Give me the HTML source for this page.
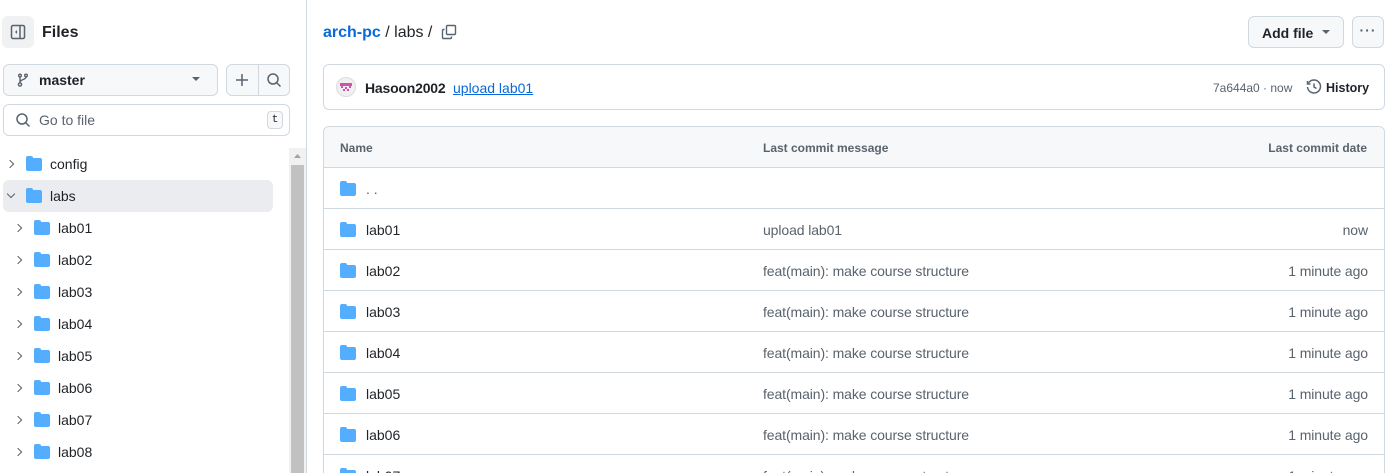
<!DOCTYPE html>
<html style="width:1393px;height:473px;overflow:hidden"><head><style>
*{box-sizing:border-box;margin:0;padding:0}
body{width:1393px;height:473px;overflow:hidden;background:#fff;font-family:"Liberation Sans",sans-serif;color:#1f2328;position:relative;font-size:14px}
.a{position:absolute}
.btn{border:1px solid #d1d9e0;background:#f6f8fa;border-radius:6px}
.fold{position:absolute;width:16px;height:13px;background:#54aeff;border-radius:2px}
.fold:before{content:"";position:absolute;left:0;top:-2px;width:7px;height:4px;background:#54aeff;border-radius:2px 2px 0 0}
.chev{position:absolute;width:6px;height:6px;border-right:1.5px solid #59636e;border-bottom:1.5px solid #59636e;transform:rotate(-45deg)}
.row{position:absolute;left:323px;width:1062px;height:41px;border-top:1px solid #d1d9e0}
.row .n{position:absolute;left:43px;top:13px;font-size:14px}
.row .m{position:absolute;left:440px;top:13px;color:#59636e;letter-spacing:-0.1px}
.row .d{position:absolute;right:17px;top:13px;color:#59636e;letter-spacing:-0.1px}
</style></head><body>
<div class="a" style="left:306px;top:0;width:1px;height:473px;background:#d1d9e0"></div>
<div class="a" style="left:2px;top:16px;width:32px;height:32px;background:#eff1f3;border-radius:6px"></div>
<svg class="a" style="left:10px;top:24px" width="16" height="16" viewBox="0 0 16 16"><rect x="1.5" y="1.5" width="13" height="13" rx="1.5" fill="none" stroke="#59636e" stroke-width="1.5"/><line x1="10" y1="2" x2="10" y2="14" stroke="#59636e" stroke-width="1.5"/><path d="M7 6 L5 8 L7 10Z" fill="#59636e"/></svg>
<div class="a" style="left:42px;top:24px;font-size:16px;font-weight:600">Files</div>
<div class="a btn" style="left:3px;top:64px;width:215px;height:32px"></div>
<svg class="a" style="left:15px;top:72px" width="16" height="16" viewBox="0 0 16 16" fill="none" stroke="#59636e" stroke-width="1.4"><circle cx="5" cy="12.5" r="1.6"/><circle cx="5" cy="3.5" r="1.3"/><circle cx="11" cy="3.5" r="1.3"/><path d="M5 5v6M11 5c0 3-6 2-6 5.5"/></svg>
<div class="a" style="left:39px;top:72px;font-weight:600">master</div>
<svg class="a" style="left:192px;top:77px" width="8" height="5"><path d="M0 0h8L4 4z" fill="#59636e"/></svg>
<div class="a btn" style="left:226px;top:64px;width:64px;height:32px"></div>
<div class="a" style="left:258px;top:65px;width:1px;height:30px;background:#d1d9e0"></div>
<svg class="a" style="left:234px;top:72px" width="16" height="16" viewBox="0 0 16 16" stroke="#59636e" stroke-width="1.5"><path d="M8 2v12M2 8h12"/></svg>
<svg class="a" style="left:266px;top:72px" width="16" height="16" viewBox="0 0 16 16" fill="none" stroke="#59636e" stroke-width="1.5"><circle cx="7" cy="7" r="5"/><path d="M10.5 10.5L14.5 14.5"/></svg>
<div class="a" style="left:3px;top:104px;width:287px;height:32px;border:1px solid #d1d9e0;border-radius:6px"></div>
<svg class="a" style="left:15px;top:112px" width="16" height="16" viewBox="0 0 16 16" fill="none" stroke="#59636e" stroke-width="1.5"><circle cx="7" cy="7" r="5"/><path d="M10.5 10.5L14.5 14.5"/></svg>
<div class="a" style="left:39px;top:112px;color:#59636e">Go to file</div>
<div class="a" style="left:267px;top:111px;width:16px;height:18px;border:1px solid #d1d9e0;border-radius:4px;font-family:'Liberation Mono',monospace;font-size:11px;text-align:center;line-height:16px;background:#f6f8fa">t</div>
<div class="a" style="left:289px;top:148px;width:17px;height:325px;background:#f1f1f1"></div>
<div class="a" style="left:291px;top:165px;width:13px;height:308px;background:#c1c1c1"></div>
<svg class="a" style="left:294px;top:154px" width="7" height="4"><path d="M0 4h7L3.5 0z" fill="#a3a3a3"/></svg>
<div class="a" style="left:3px;top:180px;width:270px;height:32px;background:#eaecef;border-radius:6px"></div>
<div class="chev" style="left:7px;top:161px"></div><div class="fold" style="left:26px;top:158px"></div><div class="a" style="left:50px;top:156px">config</div>
<div class="chev" style="left:8px;top:191px;transform:rotate(45deg)"></div><div class="fold" style="left:26px;top:190px"></div><div class="a" style="left:50px;top:188px">labs</div>
<div class="chev" style="left:15px;top:225px"></div><div class="fold" style="left:34px;top:222px"></div><div class="a" style="left:58px;top:220px">lab01</div>
<div class="chev" style="left:15px;top:257px"></div><div class="fold" style="left:34px;top:254px"></div><div class="a" style="left:58px;top:252px">lab02</div>
<div class="chev" style="left:15px;top:289px"></div><div class="fold" style="left:34px;top:286px"></div><div class="a" style="left:58px;top:284px">lab03</div>
<div class="chev" style="left:15px;top:321px"></div><div class="fold" style="left:34px;top:318px"></div><div class="a" style="left:58px;top:316px">lab04</div>
<div class="chev" style="left:15px;top:353px"></div><div class="fold" style="left:34px;top:350px"></div><div class="a" style="left:58px;top:348px">lab05</div>
<div class="chev" style="left:15px;top:385px"></div><div class="fold" style="left:34px;top:382px"></div><div class="a" style="left:58px;top:380px">lab06</div>
<div class="chev" style="left:15px;top:417px"></div><div class="fold" style="left:34px;top:414px"></div><div class="a" style="left:58px;top:412px">lab07</div>
<div class="chev" style="left:15px;top:449px"></div><div class="fold" style="left:34px;top:446px"></div><div class="a" style="left:58px;top:444px">lab08</div>
<div class="a" style="left:323px;top:24px;font-size:16px"><span style="color:#0969da;font-weight:600">arch-pc</span> / labs /</div>
<svg class="a" style="left:441px;top:24px" width="16" height="16" viewBox="0 0 16 16" fill="none" stroke="#59636e" stroke-width="1.4"><rect x="5.5" y="1.5" width="9" height="9" rx="1"/><path d="M3.5 5.5h-1a1 1 0 0 0-1 1v7a1 1 0 0 0 1 1h7a1 1 0 0 0 1-1v-1"/></svg>
<div class="a btn" style="left:1248px;top:16px;width:96px;height:32px"></div>
<div class="a" style="left:1262px;top:25px;font-weight:600">Add file</div>
<svg class="a" style="left:1322px;top:30px" width="8" height="5"><path d="M0 0h8L4 4z" fill="#59636e"/></svg>
<div class="a btn" style="left:1352px;top:16px;width:32px;height:32px;text-align:center;line-height:26px;color:#59636e;font-weight:bold;letter-spacing:1px">···</div>
<div class="a" style="left:323px;top:64px;width:1062px;height:46px;border:1px solid #d1d9e0;border-radius:6px"></div>
<svg class="a" style="left:336px;top:77px" width="20" height="20" viewBox="0 0 20 20"><circle cx="10" cy="10" r="9.5" fill="#f0f0f0" stroke="#ddd"/><path d="M4 6h12v3H4zM5 9h2v2H5zM13 9h2v2h-2zM7 12h2v2H7zM11 12h2v2h-2zM9 10h2v2H9z" fill="#d252b0"/></svg>
<div class="a" style="left:365px;top:80px;font-weight:600;letter-spacing:-0.2px">Hasoon2002</div>
<div class="a" style="left:453px;top:80px;color:#0969da;text-decoration:underline">upload lab01</div>
<div class="a" style="left:1213px;top:81px;font-size:12px;color:#59636e">7a644a0 · now</div>
<svg class="a" style="left:1306px;top:79px" width="16" height="16" viewBox="0 0 16 16" fill="none" stroke="#59636e" stroke-width="1.5"><path d="M2.5 4A6.5 6.5 0 1 1 1.5 8"/><path d="M1.5 2v3h3"/><path d="M8 4.5V8l2.5 1.5"/></svg>
<div class="a" style="left:1326px;top:81px;font-size:12.5px;font-weight:600">History</div>
<div class="a" style="left:323px;top:126px;width:1062px;height:347px;border:1px solid #d1d9e0;border-bottom:none;border-radius:6px 6px 0 0;overflow:hidden">
<div style="height:41px;background:#f6f8fa"></div></div>
<div class="a" style="left:340px;top:141px;font-size:12px;font-weight:600;color:#59636e">Name</div>
<div class="a" style="left:763px;top:141px;font-size:12px;font-weight:600;color:#59636e">Last commit message</div>
<div class="a" style="right:26px;top:141px;font-size:12px;font-weight:600;color:#59636e">Last commit date</div>
<div class="a" style="left:0;top:0;width:1393px;height:473px;overflow:hidden">
<div class="row" style="top:167px"><div class="fold" style="left:17px;top:15px"></div><div class="n" style="color:#59636e">. .</div></div>
<div class="row" style="top:208px"><div class="fold" style="left:17px;top:15px"></div><div class="n">lab01</div><div class="m">upload lab01</div><div class="d">now</div></div>
<div class="row" style="top:249px"><div class="fold" style="left:17px;top:15px"></div><div class="n">lab02</div><div class="m">feat(main): make course structure</div><div class="d">1 minute ago</div></div>
<div class="row" style="top:290px"><div class="fold" style="left:17px;top:15px"></div><div class="n">lab03</div><div class="m">feat(main): make course structure</div><div class="d">1 minute ago</div></div>
<div class="row" style="top:331px"><div class="fold" style="left:17px;top:15px"></div><div class="n">lab04</div><div class="m">feat(main): make course structure</div><div class="d">1 minute ago</div></div>
<div class="row" style="top:372px"><div class="fold" style="left:17px;top:15px"></div><div class="n">lab05</div><div class="m">feat(main): make course structure</div><div class="d">1 minute ago</div></div>
<div class="row" style="top:413px"><div class="fold" style="left:17px;top:15px"></div><div class="n">lab06</div><div class="m">feat(main): make course structure</div><div class="d">1 minute ago</div></div>
<div class="row" style="top:454px"><div class="fold" style="left:17px;top:15px"></div><div class="n">lab07</div><div class="m">feat(main): make course structure</div><div class="d">1 minute ago</div></div>
</div>
</body></html>
